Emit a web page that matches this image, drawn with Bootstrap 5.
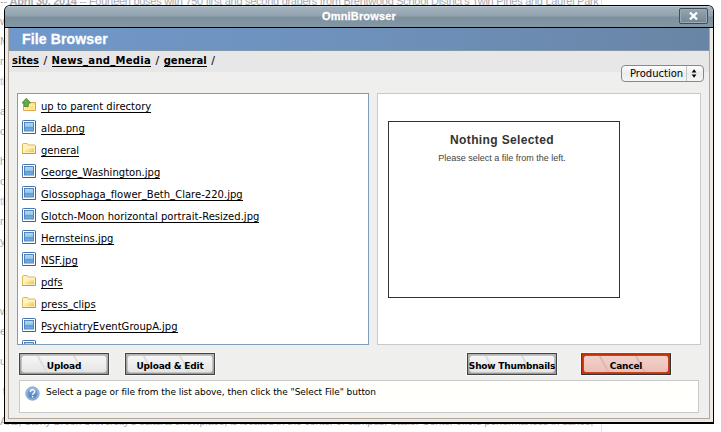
<!DOCTYPE html>
<html lang="en">
<head>
<meta charset="utf-8">
<meta name="viewport" content="width=device-width, initial-scale=1">
<title>OmniBrowser</title>
<link href="https://cdn.jsdelivr.net/npm/bootstrap@5.3.0/dist/css/bootstrap.min.css" rel="stylesheet">
<style>
body{width:721px;height:432px;overflow:hidden;background:#fff;font:10px/14px "DejaVu Sans",Verdana,sans-serif;color:#000}
.story{width:602px;margin-top:-9px;height:441px;overflow:hidden;border-right:1px solid #e2e2e2;color:#a9abb0;font:11px/20px "Liberation Sans",Arial,sans-serif;letter-spacing:-.28px;white-space:nowrap}
.story p{height:20px;margin:0}
.story .gap{margin-top:10px}
.story .blue{color:#a9c6dc}
.window{left:4px;top:5px;width:710px;height:419px;background:#000;border-radius:6px 6px 0 0;padding:1px 1px 2px}
.window-in{border-radius:5px 5px 0 0;overflow:hidden;background:#efe9e3}
.titlebar{height:22px;flex:none;background:linear-gradient(#a3b3be 0,#93a4b0 42%,#7d909d 52%,#8397a5 100%);border-bottom:1px solid #000;border-top:1px solid #bdc9d0;color:#fff;font:bold 11px/19px "Liberation Sans",Arial,sans-serif}
.title-text{width:100%;text-align:center;letter-spacing:.15px;-webkit-text-stroke:.3px #fff}
.close-x{right:5px;top:1px;width:29px;height:16px;border:1px solid #3f4e59;border-radius:2px;background:linear-gradient(#93a6b2,#738692);box-shadow:inset 0 0 0 1px #9aaab4}
.frame{margin:0 3px 3px;border:solid #b3a69c;border-width:0 1px 1px;background:#efefed;min-height:0}
.head{height:23px;flex:none;padding-left:13px;background:linear-gradient(90deg,#7098cb,#6e91bb 50%,#6985a5);border-bottom:1px solid #8298a8;color:#fff;font:bold 14px/22px "Liberation Sans",Arial,sans-serif;letter-spacing:.15px;-webkit-text-stroke:.3px #fff}
.crumbs{height:21px;flex:none;padding-left:3px;background:#e7e7e7;font-size:11px;line-height:19px;white-space:pre;word-spacing:1px}
.crumbs a,.files a{color:#000;text-decoration:none;border-bottom:1px solid #000;display:inline-block}
.crumbs a{font-weight:bold;font-size:10px;line-height:11px}
.crumbs .section{letter-spacing:.28px}
/* lifts the underscore clear of the link underline */
.lift{position:relative;top:-1px}
.env{height:21px;flex:none;padding-right:5px;margin:-7px 0 7px}
.picker{width:83px;height:17px;border:1px solid #888;border-radius:4px;background:linear-gradient(#fff,#ececec 50%,#f6f6f6);padding-left:8px;line-height:15px;font-size:10px}
.picker svg{border-left:1px solid #c4c4c4}
.panes{height:252px;flex:none;padding:0 8px;gap:8px}
.files{width:352px;border:1px solid #7f9db9;background:#fff;padding:2px 4px 0;overflow:hidden}
.files li{height:22px;gap:4px}
.files svg{flex:none;margin-top:2px}
.files a{line-height:11px;margin-top:5px;white-space:nowrap;letter-spacing:.02px}
.preview{width:324px;border:1px solid #c9c9c9;background:#fff;padding:27px 10px}
.empty{width:232px;height:177px;border:1px solid #333;color:#333;text-align:center;font-family:"Liberation Sans",Arial,sans-serif;padding-top:10px}
.empty h1{font-size:12px;line-height:16px;font-weight:bold;letter-spacing:.37px;margin:0 0 3px;padding-right:4px}
.empty p{font-size:9px;line-height:14px;margin:0;padding-right:4px;color:#444}
.actions{height:22px;flex:none;margin:8px 0 5px;padding:0 38px 0 10px}
.actions .btn{width:90px;height:22px;padding:0;border:1px solid #444;border-radius:0;font:bold 9px/21px "DejaVu Sans",sans-serif;letter-spacing:-.2px;color:#000;white-space:nowrap;background:linear-gradient(#b4b4b4,#999);box-shadow:0 0 0 1px #f8f8f8;flex:none}
.actions .btn span{display:flex;justify-content:center;margin:1px;height:18px;line-height:20px;border-radius:3px;border:1px solid #c4c4c4;background:repeating-linear-gradient(62deg,transparent 0 20px,#dedede 21px 22px,transparent 23px 32px),linear-gradient(#f6f6f6,#e5e5e5)}
.actions .cancel{background:#c93106;border-color:#c93106 #333 #333 #8c2410;margin-left:24px}
.actions .cancel span{border-color:#c8401c;background:repeating-linear-gradient(62deg,transparent 0 20px,#dfb8b1 21px 22px,transparent 23px 32px),linear-gradient(#f1d2cc,#eabfb7)}
.hint{width:680px;height:33px;flex:none;margin-left:10px;border:1px solid #c9c9c9;background:#fffffb;padding:5px 5px 0;gap:6px;font-size:9px;letter-spacing:-.055px;line-height:13px}
</style>
<script src="https://cdn.jsdelivr.net/npm/bootstrap@5.3.0/dist/js/bootstrap.bundle.min.js"></script>
</head>
<body>
<svg width="0" height="0" class="position-absolute" aria-hidden="true">
<defs>
<linearGradient id="sky" x2="0" y2="1"><stop stop-color="#b6dcf2"/><stop offset=".5" stop-color="#91c4e8"/><stop offset=".55" stop-color="#5d9bd6"/><stop offset="1" stop-color="#78b1e6"/></linearGradient>
<linearGradient id="gold" x2="1" y2="1"><stop stop-color="#fffbe0"/><stop offset=".5" stop-color="#fbe384"/><stop offset="1" stop-color="#f0bb2c"/></linearGradient>
<linearGradient id="orb" x2="0" y2="1"><stop stop-color="#7ea9d8"/><stop offset="1" stop-color="#4a7fc0"/></linearGradient>
<symbol id="image" viewBox="0 0 15 15"><rect x=".5" y=".5" width="13" height="13" rx=".8" fill="#fff" stroke="#4a75b4"/><path d="M.5 13.5h13V1" fill="none" stroke="#3963a5"/><rect x="2.5" y="2.5" width="9" height="8.500" fill="url(#sky)" stroke="#5686b8"/></symbol>
<symbol id="folder" viewBox="0 0 15 15"><path d="M.5 11.500V2.200l.7-.7h4l1 1.500h6.600l.7.700v7.800z" fill="#fff3c4" stroke="#dfb354"/><path d="M2 10.700V6.500H6L7.500 5H12.500v5.700z" fill="url(#gold)" stroke="#fff8d5" stroke-width=".8"/><path d="M.5 11.500h13V4" fill="none" stroke="#dc9138"/></symbol>
<symbol id="parent" viewBox="0 0 15 15"><path d="M1.500 12.500V4.500h12v8z" fill="url(#gold)" stroke="#dfa647"/><path d="M2.500 11.500V8.500H7l1.500-1.500h4v4.500z" fill="#fbe28b" stroke="#fff7d0" stroke-width=".7"/><path d="M2.300 8.500V5H0L4.300.300 8.700 5H6.300v3.500z" fill="#6cab43" stroke="#3d7d2b" stroke-width=".8"/></symbol>
</defs>
</svg>

<div class="story">
<p>-- <b>April 30, 2014</b> -- Fourteen buses with 750 first and second graders from Brentwood School District's Twin Pines and Laurel Park</p>
<p>w</p><p>M</p><p>n</p><p class="blue">ti</p><p class="gap">a</p><p>c</p><p class="gap">h</p><p>o</p><p class="blue">th</p><p>n</p><p>y</p><p>&nbsp;</p><p class="gap">&nbsp;&nbsp;,</p><p>w</p><p>e</p><p class="gap">u</p><p class="gap">&nbsp;f</p>
<p class="gap">Arts, Stony Brook University's cultural showplace, is located in the center of campus. Staller Center offers performances in dance,</p>
</div>

<div class="window position-absolute">
<div class="window-in d-flex flex-column h-100">
  <div class="titlebar position-relative">
    <div class="title-text">OmniBrowser</div>
    <div class="close-x position-absolute d-flex align-items-center justify-content-center" role="button" aria-label="Close"><svg width="9" height="8" viewBox="0 0 9 8"><path d="M1 .5l7 7M8 .5l-7 7" stroke="#fff" stroke-width="2.300"/></svg></div>
  </div>
  <div class="frame d-flex flex-column flex-grow-1">
    <div class="head">File Browser</div>
    <nav class="crumbs"><a href="#">sites</a> / <a href="#" class="section">News<span class="lift">_</span>and<span class="lift">_</span>Media</a> / <a href="#">general</a> /</nav>
    <div class="env d-flex justify-content-end"><div class="picker d-flex justify-content-between"><span>Production</span><svg width="17" height="15" viewBox="0 0 17 15"><path d="M5 6.500L7.500 3 10 6.500zM5 8.500h5L7.500 12z"/></svg></div></div>
    <div class="panes d-flex">
      <ul class="files list-unstyled mb-0">
        <li class="d-flex"><svg width="15" height="15"><use href="#parent"/></svg><div><a href="#">up to parent directory</a></div></li>
        <li class="d-flex"><svg width="15" height="15"><use href="#image"/></svg><div><a href="#">alda.png</a></div></li>
        <li class="d-flex"><svg width="15" height="15"><use href="#folder"/></svg><div><a href="#">general</a></div></li>
        <li class="d-flex"><svg width="15" height="15"><use href="#image"/></svg><div><a href="#">George<span class="lift">_</span>Washington.jpg</a></div></li>
        <li class="d-flex"><svg width="15" height="15"><use href="#image"/></svg><div><a href="#">Glossophaga<span class="lift">_</span>flower<span class="lift">_</span>Beth<span class="lift">_</span>Clare-220.jpg</a></div></li>
        <li class="d-flex"><svg width="15" height="15"><use href="#image"/></svg><div><a href="#">Glotch-Moon horizontal portrait-Resized.jpg</a></div></li>
        <li class="d-flex"><svg width="15" height="15"><use href="#image"/></svg><div><a href="#">Hernsteins.jpg</a></div></li>
        <li class="d-flex"><svg width="15" height="15"><use href="#image"/></svg><div><a href="#">NSF.jpg</a></div></li>
        <li class="d-flex"><svg width="15" height="15"><use href="#folder"/></svg><div><a href="#">pdfs</a></div></li>
        <li class="d-flex"><svg width="15" height="15"><use href="#folder"/></svg><div><a href="#">press<span class="lift">_</span>clips</a></div></li>
        <li class="d-flex"><svg width="15" height="15"><use href="#image"/></svg><div><a href="#">PsychiatryEventGroupA.jpg</a></div></li>
        <li class="d-flex"><svg width="15" height="15"><use href="#image"/></svg></li>
      </ul>
      <div class="preview"><div class="empty"><h1>Nothing Selected</h1><p>Please select a file from the left.</p></div></div>
    </div>
    <div class="actions d-flex">
      <button class="btn"><span>Upload</span></button>
      <button class="btn ms-3"><span>Upload &amp; Edit</span></button>
      <button class="btn ms-auto"><span>Show Thumbnails</span></button>
      <button class="btn cancel"><span>Cancel</span></button>
    </div>
    <div class="hint d-flex"><svg class="flex-shrink-0" width="15" height="15" viewBox="0 0 15 15"><circle cx="7.500" cy="7.500" r="6.700" fill="url(#orb)" stroke="#8faed0"/><circle cx="7.500" cy="7.500" r="5.600" fill="none" stroke="#b9d0eb" stroke-width=".8"/><path d="M5.300 6c0-3 4.500-2.800 4.400-.3 0 1.600-2.100 1.500-2.100 3.100M7.600 10v1.400" fill="none" stroke="#fff" stroke-width="1.400"/></svg><span>Select a page or file from the list above, then click the "Select File" button</span></div>
  </div>
</div>
</div>
</body>
</html>
